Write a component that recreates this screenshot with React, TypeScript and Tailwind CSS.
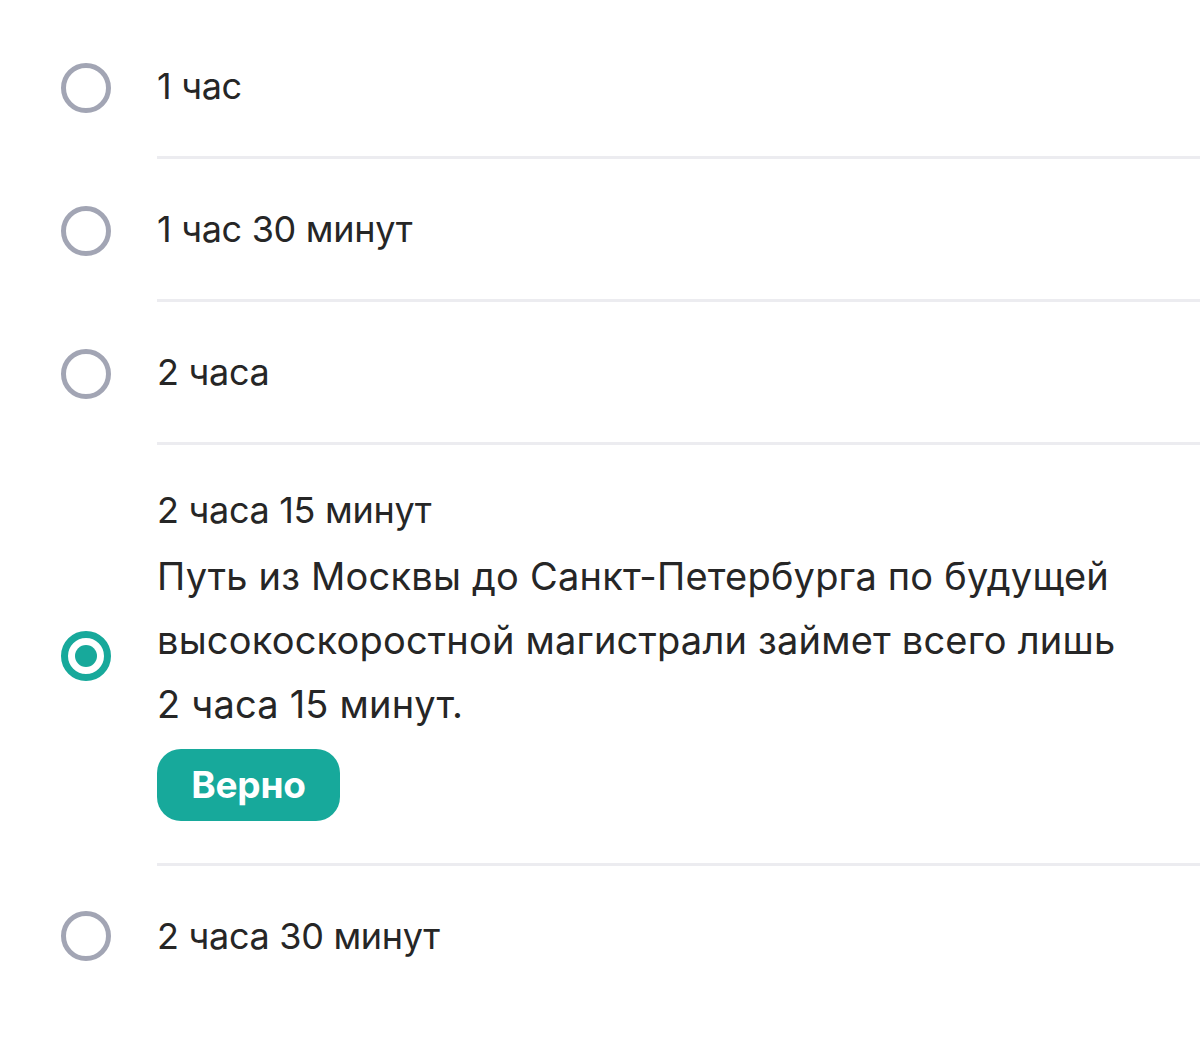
import React from 'react';

type Option = {
  label: string;
  selected?: boolean;
  explanation?: string;
};

const options: Option[] = [
  { label: '1 час' },
  { label: '1 час 30 минут' },
  { label: '2 часа' },
  {
    label: '2 часа 15 минут',
    selected: true,
    explanation:
      'Путь из Москвы до Санкт-Петербурга по будущей высокоскоростной магистрали займет всего лишь 2 часа 15 минут.',
  },
  { label: '2 часа 30 минут' },
];

const Radio = ({ checked }: { checked?: boolean }) =>
  checked ? (
    <div className="w-[50px] h-[50px] rounded-full border-[7px] border-[#17a99b] flex items-center justify-center shrink-0">
      <div className="w-[22px] h-[22px] rounded-full bg-[#17a99b]" />
    </div>
  ) : (
    <div className="w-[50px] h-[50px] rounded-full border-[5px] border-[#a2a5b4] shrink-0" />
  );

export default function App() {
  return (
    <div
      className="w-[1200px] h-[1038px] bg-white overflow-hidden pt-[16px] text-[#262626]"
      style={{ fontFamily: 'Inter, "Noto Sans", sans-serif' }}
    >
      {options.map((o, i) => (
        <div key={i} className="flex items-center">
          <div className="w-[157px] shrink-0 flex pl-[61px]">
            <Radio checked={o.selected} />
          </div>
          <div
            className={`flex-1 ${i < options.length - 1 ? 'border-b-[3px] border-[#ececf0]' : ''} ${
              o.selected ? 'pt-[33px] pb-[42px]' : 'py-[38px]'
            }`}
          >
            <div className="text-[36px] leading-[64px] tracking-[-0.3px]">{o.label}</div>
            {o.explanation && (
              <>
                <p className="text-[38px] leading-[64px] tracking-[0.2px] pr-[60px] mt-[2px]">{o.explanation}</p>
                <div className="mt-[13px] inline-flex items-center justify-center h-[72px] w-[183px] rounded-[24px] bg-[#17a99b] text-white text-[37px] font-bold tracking-[-0.2px]">
                  Верно
                </div>
              </>
            )}
          </div>
        </div>
      ))}
    </div>
  );
}
